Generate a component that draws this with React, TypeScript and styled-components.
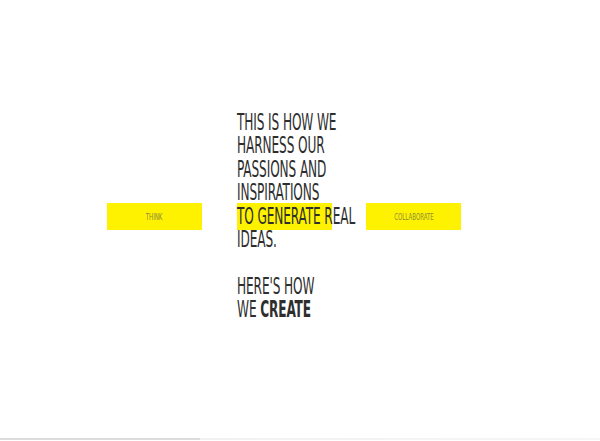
import React from "react";
import styled, { createGlobalStyle } from "styled-components";

const Global = createGlobalStyle`
  html, body { margin: 0; padding: 0; background: #fff; }
  body { width: 600px; height: 441px; overflow: hidden; }
`;

const Page = styled.div`
  position: relative;
  width: 600px;
  height: 441px;
  display: flex;
  flex-direction: column;
`;

const Stage = styled.div`
  flex: 1;
  display: grid;
  grid-template-columns: 95px 35px 95px 34px 95px;
  align-items: start;
  padding: 111px 0 0 107px;
`;

const Tile = styled.div<{ $col: number }>`
  grid-row: 1;
  grid-column: ${(p) => p.$col};
  align-self: start;
  margin-top: 92px;
  height: 27px;
  background: #fff200;
  display: flex;
  align-items: center;
  justify-content: center;
`;

const Label = styled.span`
  display: inline-block;
  font-family: "DejaVu Sans Condensed", "DejaVu Sans", sans-serif;
  font-size: 9.5px;
  color: #8b8a3c;
  transform: scaleX(0.64);
  white-space: nowrap;
`;

const Copy = styled.div`
  grid-row: 1;
  grid-column: 3;
  position: relative;
  z-index: 1;
  width: 95px;
  white-space: nowrap;
  font-family: "DejaVu Sans Condensed", "DejaVu Sans", sans-serif;
  font-size: 22.5px;
  line-height: 23.4px;
  color: #2e2e2e;
  letter-spacing: -0.2px;
  transform: scaleX(0.6);
  transform-origin: left top;
`;

const Strong = styled.b`
  font-weight: 700;
`;

const Footer = styled.div`
  height: 2px;
  margin-bottom: 1px;
  background: linear-gradient(to right, #dcdcdc 0, #dcdcdc 200px, #f1f1f1 200px, #f6f6f6 100%);
`;

export default function App() {
  return (
    <Page>
      <Global />
      <Stage>
        <Tile $col={1}>
          <Label>THINK</Label>
        </Tile>
        <Tile $col={3} />
        <Tile $col={5}>
          <Label>COLLABORATE</Label>
        </Tile>
        <Copy>
          THIS IS HOW WE<br />
          HARNESS OUR<br />
          PASSIONS AND<br />
          INSPIRATIONS<br />
          TO GENERATE REAL<br />
          IDEAS.<br />
          <br />
          HERE'S HOW<br />
          WE <Strong>CREATE</Strong>
        </Copy>
      </Stage>
      <Footer />
    </Page>
  );
}
